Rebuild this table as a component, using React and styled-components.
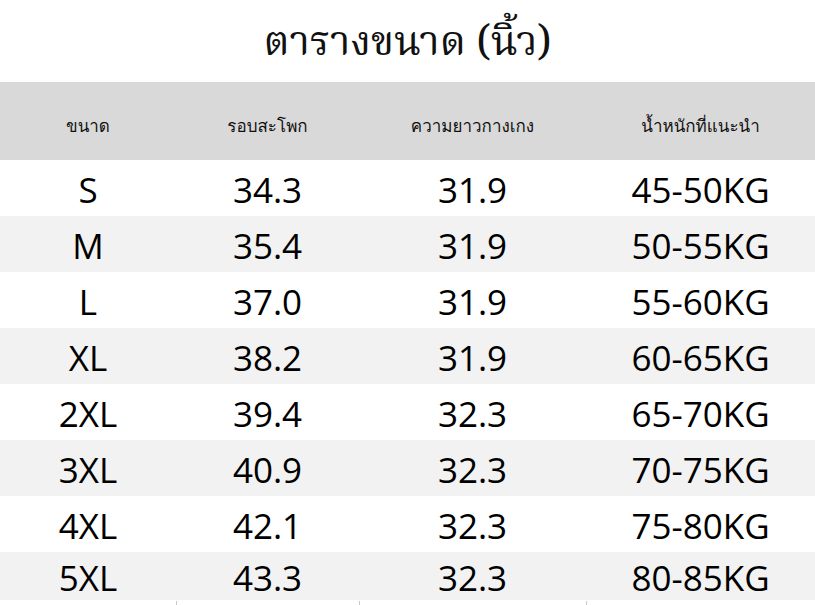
import React from "react";
import styled, { createGlobalStyle } from "styled-components";

const Global = createGlobalStyle`
  html, body { margin: 0; padding: 0; background: #fff; }
  body { width: 815px; height: 605px; overflow: hidden; }
`;

const Page = styled.div`
  width: 815px;
  height: 605px;
  display: flex;
  flex-direction: column;
  overflow: hidden;
`;

const Title = styled.h1`
  margin: 0;
  height: 82px;
  flex: none;
  display: flex;
  align-items: center;
  justify-content: center;
  font-family: "Kinnari", "Norasi", "Noto Serif Thai", "Liberation Serif", serif;
  font-weight: 400;
  font-size: 41px;
  color: #111;
  padding-top: 6px;
  box-sizing: border-box;
`;

const cols = "176px 183px 227px 1fr";

const HeaderRow = styled.div`
  display: grid;
  grid-template-columns: ${cols};
  height: 78px;
  flex: none;
  background: #d9d9d9;
  align-items: center;
`;

const HeadCell = styled.div`
  text-align: center;
  font-family: "Loma", "Garuda", "Noto Sans Thai", "Liberation Serif", serif;
  font-size: 17px;
  color: #111;
  padding-top: 8px;
`;

const Row = styled.div`
  display: grid;
  grid-template-columns: ${cols};
  height: ${(p) => p.$h || 56}px;
  flex: none;
  background: ${(p) => (p.$alt ? "#f2f2f2" : "#fff")};
  align-items: center;
`;

const Cell = styled.div`
  text-align: center;
  font-family: "Open Sans", "Noto Sans", sans-serif;
  font-size: 35px;
  color: #000;
  padding-top: 2px;
`;

const TailRow = styled.div`
  display: grid;
  grid-template-columns: ${cols};
  height: 6px;
  flex: none;
  margin-top: 1px;
`;

const TailCell = styled.div`
  border-left: ${(p) => (p.$first ? "none" : "1px solid #c8c8c8")};
`;

const headers = ["ขนาด", "รอบสะโพก", "ความยาวกางเกง", "น้ำหนักที่แนะนำ"];
const data = [
  ["S", "34.3", "31.9", "45-50KG"],
  ["M", "35.4", "31.9", "50-55KG"],
  ["L", "37.0", "31.9", "55-60KG"],
  ["XL", "38.2", "31.9", "60-65KG"],
  ["2XL", "39.4", "32.3", "65-70KG"],
  ["3XL", "40.9", "32.3", "70-75KG"],
  ["4XL", "42.1", "32.3", "75-80KG"],
  ["5XL", "43.3", "32.3", "80-85KG"],
];

export default function App() {
  return (
    <Page>
      <Global />
      <Title>ตารางขนาด (นิ้ว)</Title>
      <HeaderRow>
        {headers.map((h) => (
          <HeadCell key={h}>{h}</HeadCell>
        ))}
      </HeaderRow>
      {data.map((r, i) => (
        <Row key={r[0]} $alt={i % 2 === 1} $h={i === data.length - 1 ? 48 : 56}>
          {r.map((c, j) => (
            <Cell key={j}>{c}</Cell>
          ))}
        </Row>
      ))}
      <TailRow>
        {[0, 1, 2, 3].map((k) => (
          <TailCell key={k} $first={k === 0} />
        ))}
      </TailRow>
    </Page>
  );
}
